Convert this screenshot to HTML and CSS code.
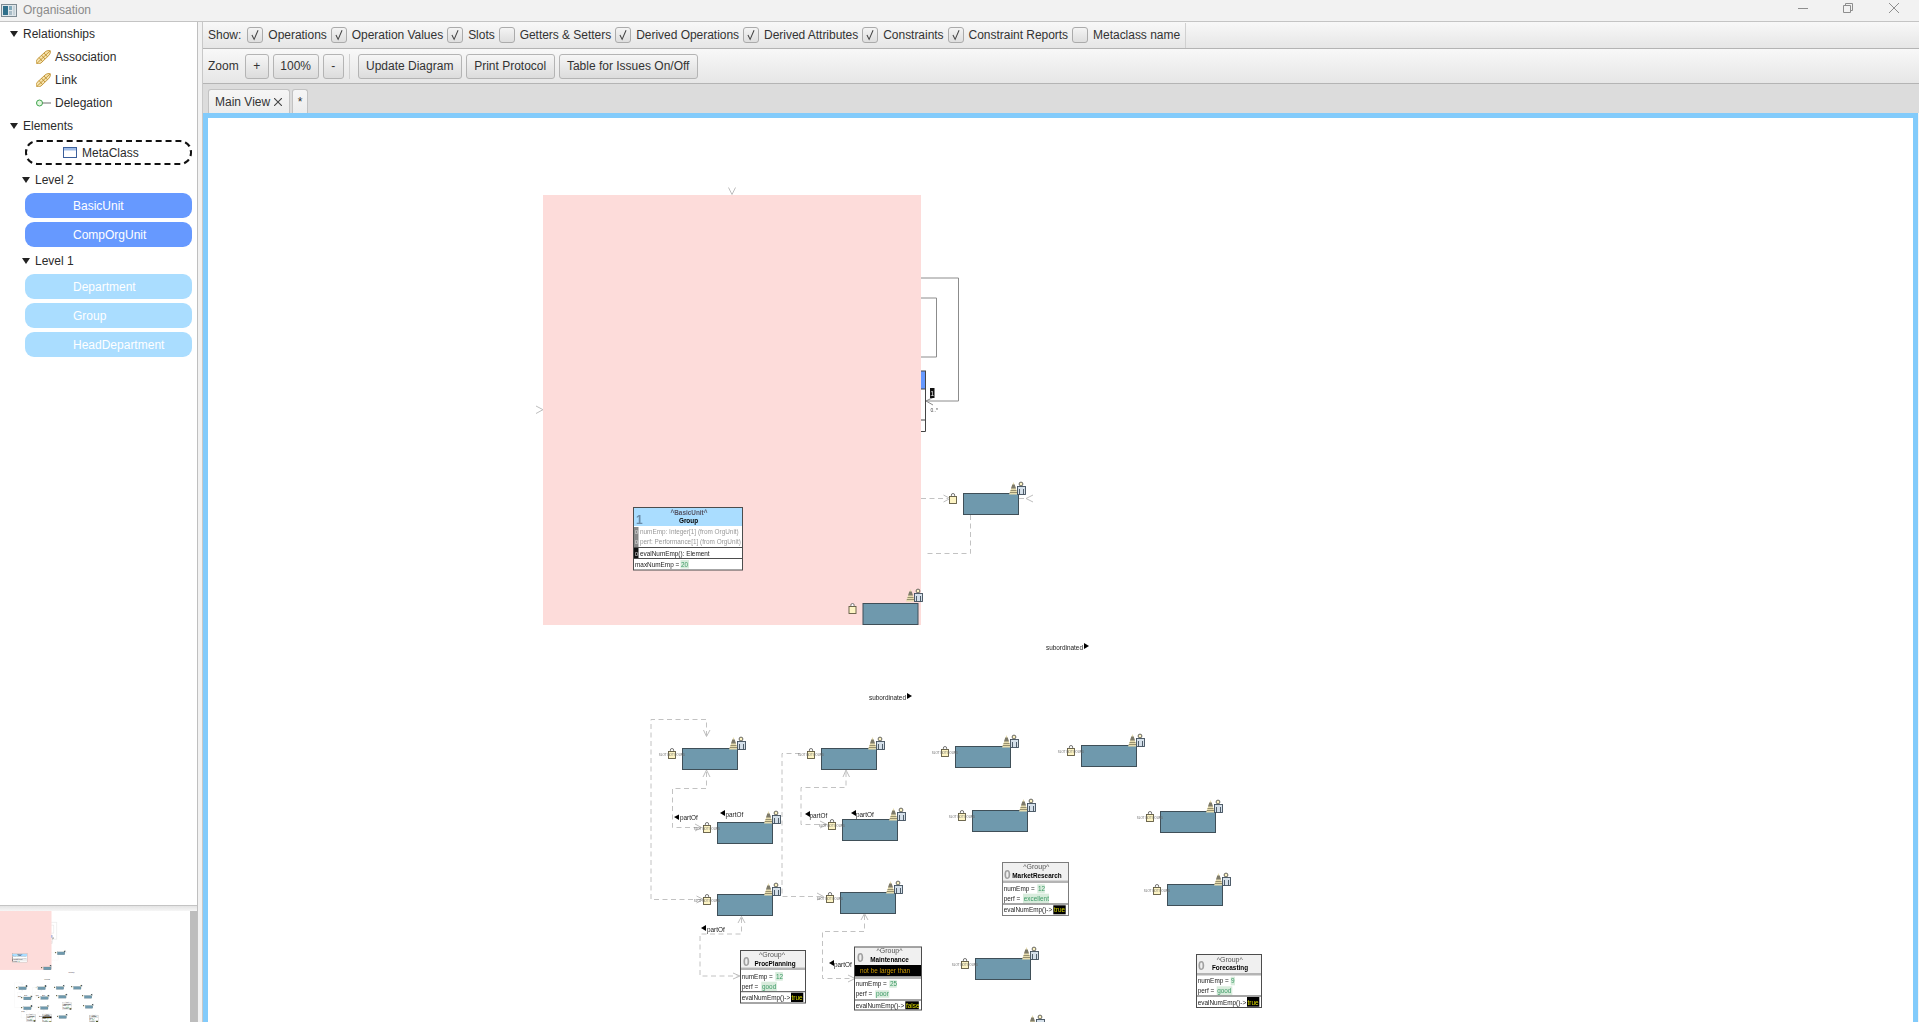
FILE: index.html
```html
<!DOCTYPE html>
<html lang="en">
<head>
<meta charset="utf-8">
<title>Organisation</title>
<link rel="stylesheet" href="styles.css">
</head>
<body>
<div class="app">
  <header class="titlebar">
    <svg class="app-icon" viewBox="0 0 16 13"><rect x="0.5" y="0.5" width="15" height="12" fill="#dfe6ea" stroke="#7d8a92"/><rect x="2" y="2" width="5" height="9" fill="#2f6f8a"/><rect x="8" y="2" width="3" height="4" fill="#7fa8ba"/><rect x="8" y="7" width="3" height="4" fill="#a9bcc6"/><rect x="12" y="2" width="2" height="9" fill="#c6d2d8"/></svg>
    <span class="app-title">Organisation</span>
    <div class="win-controls">
      <svg class="win-btn" viewBox="0 0 10 10"><path d="M0 5.500H10"/></svg>
      <svg class="win-btn restore" viewBox="0 0 10 10"><path d="M0.500 2.500H7.500V9.500H0.500ZM2.500 2.500V0.500H9.500V7.500H7.500"/></svg>
      <svg class="win-btn" viewBox="0 0 10 10"><path d="M0 0L10 10M10 0L0 10"/></svg>
    </div>
  </header>
  <div class="workspace">
    <aside class="sidebar">
      <nav class="palette">
        <div class="tree-row"><span class="caret"></span>Relationships</div>
        <div class="tree-row leaf">
          <svg class="tool-icon" viewBox="0 0 15 14"><g class="assoc"><path d="M1 9.500L9 2C10.500 .6 13.500 .2 14.300 .7 14.800 1.400 14.200 4 12.800 5.500L5 13C3.500 14 .8 14 .4 13.300 .1 12.500 .3 10.500 1 9.500Z"/><path d="M1 13.300L14 1M3 7.500L6.500 11.500M5.500 5.200L9 9M8 3L11.500 6.800"/></g></svg>Association</div>
        <div class="tree-row leaf">
          <svg class="tool-icon" viewBox="0 0 15 14"><g class="assoc"><path d="M1 9.500L9 2C10.500 .6 13.500 .2 14.300 .7 14.800 1.400 14.200 4 12.800 5.500L5 13C3.500 14 .8 14 .4 13.300 .1 12.500 .3 10.500 1 9.500Z"/><path d="M1 13.300L14 1M3 7.500L6.500 11.500M5.500 5.200L9 9M8 3L11.500 6.800"/></g></svg>Link</div>
        <div class="tree-row leaf">
          <svg class="tool-icon" viewBox="0 0 15 14"><circle cx="3.500" cy="7" r="3" fill="#e4f7e0" stroke="#3fa34d"/><path d="M6.500 7H15" stroke="#6e6e6e" fill="none"/></svg>Delegation</div>
        <div class="tree-row"><span class="caret"></span>Elements</div>
        <div class="pill-stack">
          <div class="pill-dashed">
            <svg class="class-icon" viewBox="0 0 14 11"><rect x="0.500" y="0.500" width="13" height="10" fill="#fff" stroke="#3b5f9b"/><rect x="1" y="1" width="12" height="2.500" fill="#9dbbe8"/></svg>MetaClass</div>
          <div class="tree-row sub"><span class="caret"></span>Level 2</div>
          <div class="pill strong">BasicUnit</div>
          <div class="pill strong">CompOrgUnit</div>
          <div class="tree-row sub"><span class="caret"></span>Level 1</div>
          <div class="pill light">Department</div>
          <div class="pill light">Group</div>
          <div class="pill light">HeadDepartment</div>
        </div>
      </nav>
      <div class="minimap">
        <div class="minimap-view">
          <svg class="minimap-svg" viewBox="545 195 1387 810"><use href="#diagram"/></svg>
        </div>
        <div class="minimap-scroll"></div>
      </div>
    </aside>
    <div class="splitter"></div>
    <main class="editor">
      <div class="toolbar show-bar">
        <span class="bar-label">Show:</span>
        <label class="opt"><span class="box"><svg viewBox="0 0 16 16"><path d="M4.500 8L7 13L11.500 2.500"/></svg></span>Operations</label>
        <label class="opt"><span class="box"><svg viewBox="0 0 16 16"><path d="M4.500 8L7 13L11.500 2.500"/></svg></span>Operation Values</label>
        <label class="opt"><span class="box"><svg viewBox="0 0 16 16"><path d="M4.500 8L7 13L11.500 2.500"/></svg></span>Slots</label>
        <label class="opt"><span class="box"></span>Getters &amp; Setters</label>
        <label class="opt"><span class="box"><svg viewBox="0 0 16 16"><path d="M4.500 8L7 13L11.500 2.500"/></svg></span>Derived Operations</label>
        <label class="opt"><span class="box"><svg viewBox="0 0 16 16"><path d="M4.500 8L7 13L11.500 2.500"/></svg></span>Derived Attributes</label>
        <label class="opt"><span class="box"><svg viewBox="0 0 16 16"><path d="M4.500 8L7 13L11.500 2.500"/></svg></span>Constraints</label>
        <label class="opt"><span class="box"><svg viewBox="0 0 16 16"><path d="M4.500 8L7 13L11.500 2.500"/></svg></span>Constraint Reports</label>
        <label class="opt"><span class="box"></span>Metaclass name</label>
        <span class="sep tall"></span>
      </div>
      <div class="toolbar action-bar">
        <span class="bar-label">Zoom</span>
        <button class="btn plus">+</button>
        <button class="btn pct">100%</button>
        <button class="btn minus">-</button>
        <span class="sep"></span>
        <button class="btn update">Update Diagram</button>
        <button class="btn print">Print Protocol</button>
        <button class="btn table">Table for Issues On/Off</button>
      </div>
      <div class="tabbar">
        <div class="tab main-tab">Main View<svg class="tab-x" viewBox="0 0 8 8"><path d="M0 0L8 8M8 0L0 8"/></svg></div>
        <div class="tab add-tab">*</div>
      </div>
      <div class="canvas">
        <svg class="diagram" viewBox="208 118 1705 904" preserveAspectRatio="xMinYMin slice">
          <defs>
            <g id="lock" class="lock">
              <circle cx="4" cy="2.200" r="1.700"/>
              <rect x="0.500" y="3.500" width="7" height="7"/>
            </g>
            <g id="block">
              <rect class="block" x="0.500" y="0.500" width="55" height="21"/>
              <use href="#lock" x="-14" y="0"/>
            </g>
            <g id="slot">
              <use href="#block"/>
              <text class="slot" x="-10" y="7.500">SLOT NOT FOUND</text>
            </g>
            <g id="badge">
              <polygon class="pyr" points="0,12.500 9,12.500 4.500,0"/>
              <path class="pyr-top" d="M3.300 2.500H5.700L7 6.500H2Z"/>
              <path class="pyr-line" d="M1.500 8.500H7.500M.8 10.500H8.200"/>
              <circle class="head" cx="12" cy="2" r="1.900"/>
              <rect class="torso" x="8.500" y="4.500" width="8" height="8"/>
              <path class="torso-line" d="M10.500 7V12.500M14.500 7V12.500"/>
            </g>
          </defs>
          <g id="diagram">
            <g class="frame">
              <path d="M760 278H958.500V401H926"/>
              <path d="M760 298H936.500V357H760"/>
              <rect class="frame-blue" x="800" y="371" width="125.500" height="18"/>
              <path class="frame-dark" d="M925.500 389V431.500H800M800 420H925.500"/>
              <path class="open" d="M933 397.500L926 401L933 405"/>
            </g>
            <rect class="mult-box" x="930" y="388" width="4.500" height="10"/>
            <text class="mult" x="932.300" y="396">1</text>
            <text class="card-num" x="930.500" y="412">0..*</text>

            <rect class="pink" x="543" y="195" width="378" height="430"/>

            <g class="edge">
              <path d="M921 498.500H948"/>
              <path d="M1019 498.500H1025"/>
              <path d="M970.500 515V553.500H924"/>
              <path d="M706.500 736V719.500H651V899.500H703"/>
              <path d="M706.500 772V788.500H672.500V827.500H701"/>
              <path d="M800 753.500H782V896.500H823"/>
              <path d="M846 772V787.500H801V824.500H826"/>
              <path d="M741.500 918V934H700V976H739"/>
              <path d="M864.500 915V931.500H822.500V978.500H853"/>
            </g>
            <g class="open">
              <path d="M728.500 187.500L732 194.500L735.500 187.500"/>
              <path d="M536 406L543 409.700L536 413.500"/>
              <path d="M943.500 495L950 498.500L943.500 502"/>
              <path d="M1033 495L1026 498.500L1033 502"/>
              <path d="M703.500 730L706.500 736.500L710 730"/>
              <path d="M703 777L706.500 770L710 777"/>
              <path d="M695 824L701.500 827.500L695 831"/>
              <path d="M696.500 896L703.500 899.500L696.500 903"/>
              <path d="M843 777L846 770L849.500 777"/>
              <path d="M820 821L827 824.500L820 828"/>
              <path d="M817 893L823.500 896.500L817 900"/>
              <path d="M738 923L741.500 916.500L745 923"/>
              <path d="M733 973L740 976L733 979"/>
              <path d="M861 920L864.500 913.500L868 920"/>
              <path d="M848 975L855 978.500L848 982"/>
            </g>

            <use href="#block" x="963" y="493"/><use href="#badge" x="1009" y="482"/>
            <use href="#block" x="862.500" y="603"/><use href="#badge" x="906" y="589"/>
            <use href="#slot" x="682" y="748"/><use href="#badge" x="729" y="737"/>
            <use href="#slot" x="717" y="822"/><use href="#badge" x="764" y="811"/>
            <use href="#slot" x="717" y="894"/><use href="#badge" x="764" y="883"/>
            <use href="#slot" x="821" y="748"/><use href="#badge" x="868" y="737"/>
            <use href="#slot" x="842" y="819"/><use href="#badge" x="889" y="808"/>
            <use href="#slot" x="840" y="892"/><use href="#badge" x="886" y="881"/>
            <use href="#slot" x="955" y="746"/><use href="#badge" x="1002" y="735"/>
            <use href="#slot" x="1081" y="745"/><use href="#badge" x="1128" y="734"/>
            <use href="#slot" x="972" y="810"/><use href="#badge" x="1019" y="799"/>
            <use href="#slot" x="975" y="958"/><use href="#badge" x="1022" y="947"/>
            <use href="#slot" x="1160" y="811"/><use href="#badge" x="1206" y="800"/>
            <use href="#slot" x="1167" y="884"/><use href="#badge" x="1214" y="873"/>
            <use href="#badge" x="1028" y="1015"/>

            <g class="role">
              <path d="M679 814.500V820L674 817Z"/><text x="680" y="820">partOf</text>
              <path d="M725 810V816L720 813Z"/><text x="725.500" y="817">partOf</text>
              <path d="M810 811V817L805 814Z"/><text x="809.500" y="818">partOf</text>
              <path d="M856 810V816L851 813Z"/><text x="856" y="816.500">partOf</text>
              <path d="M706 925V931L701 928Z"/><text x="707" y="932">partOf</text>
              <path d="M834 960V966L829 963Z"/><text x="834" y="967">partOf</text>
              <text x="1046" y="650">subordinated</text><path d="M1084 643V649L1089 646Z"/>
              <text x="869" y="700">subordinated</text><path d="M907 693V699L912 696Z"/>
            </g>

            <!-- Group -->
            <g>
              <rect class="card-bg" x="633.500" y="507.500" width="109" height="62.500"/>
              <rect class="head-blue" x="634" y="508" width="108" height="18"/>
              <text class="stereo bold-soft" x="689" y="514.500">^BasicUnit^</text>
              <text class="name" x="688.500" y="523">Group</text>
              <text class="level level-blue" x="636" y="523.500">1</text>
              <rect class="mark-gray" x="634" y="527" width="4.500" height="20"/>
              <text class="mark-text" x="634.700" y="534">0</text>
              <text class="mark-text" x="634.700" y="544">0</text>
              <text class="row muted" x="640" y="534">numEmp: Integer[1] (from OrgUnit)</text>
              <text class="row muted" x="640" y="544">perf: Performance[1] (from OrgUnit)</text>
              <path class="rule" d="M634 547.500H742M634 558.500H742"/>
              <rect class="mark-black" x="634" y="548" width="4.500" height="10"/>
              <text class="mark-text" x="634.700" y="556">0</text>
              <text class="row" x="640" y="556">evalNumEmp(): Element</text>
              <rect class="val-bg" x="680.500" y="560" width="8.500" height="8.500"/>
              <text class="row" x="635" y="567">maxNumEmp =</text>
              <text class="row val" x="681" y="567">20</text>
              <rect class="card-line" x="633.500" y="507.500" width="109" height="62.500"/>
            </g>

            <!-- ProcPlanning -->
            <g>
              <rect class="card-bg" x="740.500" y="950.500" width="65" height="52.500"/>
              <rect class="head-gray" x="741" y="951" width="64" height="16.500"/>
              <rect class="bar" x="741" y="967.500" width="64" height="2.500"/>
              <text class="stereo" x="772" y="957">^Group^</text>
              <text class="name" x="775" y="966">ProcPlanning</text>
              <text class="level" x="743" y="966">0</text>
              <text class="row" x="741.700" y="978.500">numEmp =</text>
              <rect class="val-bg" x="775.300" y="972" width="7.500" height="8.700"/><text class="row val" x="776" y="978.500">12</text>
              <text class="row" x="741.700" y="988.700">perf =</text>
              <rect class="val-bg" x="761.300" y="981.700" width="15.500" height="9.300"/><text class="row val" x="762" y="988.700">good</text>
              <path class="rule" d="M741 991.700H805"/>
              <text class="row" x="741.700" y="1000">evalNumEmp()-&gt;</text>
              <rect class="res-bg" x="791" y="992.700" width="12.300" height="9.300"/><text class="res" x="791.500" y="1000">true</text>
              <rect class="card-line" x="740.500" y="950.500" width="65" height="52.500"/>
            </g>

            <!-- Maintenance -->
            <g>
              <rect class="card-bg" x="854.500" y="947" width="67" height="63"/>
              <rect class="head-gray" x="855" y="947.500" width="66" height="17.500"/>
              <text class="stereo" x="889.500" y="953">^Group^</text>
              <text class="name" x="889.500" y="962">Maintenance</text>
              <text class="level" x="857" y="961.500">0</text>
              <rect class="res-bg" x="855" y="965" width="66" height="11.500"/>
              <text class="warn" x="860" y="973.200">not be larger than</text>
              <rect class="bar" x="855" y="976.500" width="66" height="2.500"/>
              <text class="row" x="855.700" y="986">numEmp =</text>
              <rect class="val-bg" x="889.300" y="980.300" width="7.500" height="7.500"/><text class="row val" x="890" y="986">25</text>
              <text class="row" x="855.700" y="996">perf =</text>
              <rect class="val-bg" x="875.300" y="990.300" width="14" height="7.500"/><text class="row val" x="876" y="996">poor</text>
              <path class="rule" d="M855 1000H921"/>
              <text class="row" x="855.700" y="1007.500">evalNumEmp()-&gt;</text>
              <rect class="res-bg" x="905.300" y="1001.300" width="13.500" height="8"/><text class="res" x="906" y="1007.500">false</text>
              <rect class="card-line" x="854.500" y="947" width="67" height="63"/>
            </g>

            <!-- MarketResearch -->
            <g>
              <rect class="card-bg" x="1002.500" y="862.500" width="66" height="53"/>
              <rect class="head-gray" x="1003" y="863" width="65" height="17.500"/>
              <rect class="bar" x="1003" y="880.500" width="65" height="2.500"/>
              <text class="stereo" x="1036.300" y="869">^Group^</text>
              <text class="name" x="1037" y="878">MarketResearch</text>
              <text class="level" x="1004" y="878.500">0</text>
              <text class="row" x="1003.700" y="891">numEmp =</text>
              <rect class="val-bg" x="1037.300" y="884.300" width="7.500" height="9"/><text class="row val" x="1038" y="891">12</text>
              <text class="row" x="1003.700" y="901">perf =</text>
              <rect class="val-bg" x="1023" y="893.700" width="26" height="9.600"/><text class="row val" x="1023.700" y="901">excellent</text>
              <path class="rule" d="M1003 904H1068"/>
              <text class="row" x="1003.700" y="912">evalNumEmp()-&gt;</text>
              <rect class="res-bg" x="1053.300" y="905.300" width="12.400" height="9"/><text class="res" x="1054" y="912">true</text>
              <rect class="card-line soft" x="1002.500" y="862.500" width="66" height="53"/>
            </g>

            <!-- Forecasting -->
            <g>
              <rect class="card-bg" x="1196.500" y="954.500" width="65" height="53"/>
              <rect class="head-gray" x="1197" y="955" width="64" height="18"/>
              <rect class="bar" x="1197" y="973" width="64" height="2.500"/>
              <text class="stereo" x="1229.700" y="961.700">^Group^</text>
              <text class="name" x="1230" y="970">Forecasting</text>
              <text class="level" x="1198" y="970">0</text>
              <text class="row" x="1197.700" y="983">numEmp =</text>
              <rect class="val-bg" x="1230.700" y="976.700" width="4.300" height="8.600"/><text class="row val" x="1231" y="983">9</text>
              <text class="row" x="1197.700" y="993">perf =</text>
              <rect class="val-bg" x="1216.700" y="986.300" width="15.600" height="9"/><text class="row val" x="1217.200" y="993">good</text>
              <path class="rule" d="M1197 996H1261"/>
              <text class="row" x="1197.700" y="1004.700">evalNumEmp()-&gt;</text>
              <rect class="res-bg" x="1247" y="997" width="12.300" height="9.700"/><text class="res" x="1247.500" y="1004.500">true</text>
              <rect class="card-line" x="1196.500" y="954.500" width="65" height="53"/>
            </g>
          </g>
        </svg>
      </div>
    </main>
  </div>
</div>
</body>
</html>
```
FILE: styles.css
```css
* { box-sizing: border-box; }
html, body { margin: 0; height: 100%; overflow: hidden; }
body { font-family: "Liberation Sans", Arial, sans-serif; font-size: 12px; color: #333; background: #f4f4f4; }
.app { display: flex; flex-direction: column; height: 100vh; }

.titlebar { height: 22px; flex: none; display: flex; align-items: center; background: #f2f2f2; border-bottom: 1px solid #c4c4c4; padding-left: 1px; padding-bottom: 1px; }
.app-icon { width: 16px; height: 13px; }
.app-title { margin-left: 6px; color: #8a8a8a; font-size: 12px; }
.win-controls { margin-left: auto; display: flex; gap: 35px; padding: 0 20px 4px 0; }
.win-btn { width: 10px; height: 10px; fill: none; stroke: #8e8e8e; stroke-width: 1; }
.win-btn.restore { margin-right: 1px; }

.workspace { flex: 1; min-height: 0; display: flex; }
.sidebar { width: 197px; flex: none; display: flex; flex-direction: column; background: #fff; }
.palette { flex: 1; min-height: 0; padding-right: 5px; }
.tree-row { height: 23px; display: flex; align-items: center; padding-left: 10px; color: #2b2b2b; }
.tree-row.leaf { padding-left: 36px; }
.caret { width: 0; height: 0; border-left: 4px solid transparent; border-right: 4px solid transparent; border-top: 6px solid #222; margin-right: 5px; }
.tool-icon { width: 15px; height: 14px; margin-right: 4px; flex: none; }
.assoc { fill: #f6e3ae; stroke: #b98620; stroke-width: 0.8; }
.pill-stack { display: flex; flex-direction: column; gap: 4px; padding: 3px 0 0 25px; }
.pill-stack .tree-row.sub { margin: -2px 0 -2px -25px; padding-left: 22px; }
.pill-dashed { width: 167px; height: 25px; margin-bottom: 1px; display: flex; align-items: center; padding-left: 36px; border: 2px dashed #111; border-radius: 12px; color: #2b2b2b; }
.class-icon { width: 14px; height: 11px; margin-right: 5px; }
.pill { width: 167px; height: 25px; display: flex; align-items: center; padding-left: 48px; border-radius: 9px; color: #fff; }
.pill.strong { background: #6699ff; }
.pill.light { background: #aaddff; }

.minimap { height: 117px; flex: none; border-top: 1px solid #c4c4c4; padding-top: 5px; display: flex; background: linear-gradient(#e4e4e4, #f6f6f6 5px, #fff 5px); }
.minimap-view { width: 190px; overflow: hidden; background: #fff; }
.minimap-svg { display: block; width: 190px; height: 111px; }
.minimap-scroll { width: 7px; background: #bdbdbd; }

.splitter { width: 6px; flex: none; background: #f2f2f2; border-left: 1px solid #bfbfbf; border-right: 1px solid #c8c8c8; }

.editor { flex: 1; min-width: 0; display: flex; flex-direction: column; }
.toolbar { display: flex; align-items: center; flex: none; background: linear-gradient(#f8f8f8, #e6e6e6); border-bottom: 1px solid #b4b4b4; padding-left: 5px; color: #333; }
.show-bar { height: 27px; }
.action-bar { height: 35px; }
.bar-label { margin-right: 6px; }
.opt { display: flex; align-items: center; gap: 5px; margin-right: 4px; white-space: nowrap; letter-spacing: -0.03px; }
.box { width: 16px; height: 16px; flex: none; border: 1px solid #ababab; border-radius: 3px; background: linear-gradient(#f4f4f4, #dedede); }
.box svg { display: block; width: 14px; height: 14px; fill: none; stroke: #444; stroke-width: 1.2; }
.sep { width: 1px; height: 25px; background: #d0d0d0; margin: 0 8px 0 1px; }
.btn { height: 25px; padding: 0; font: inherit; color: #333; border: 1px solid #b4b4b4; border-radius: 3px; background: linear-gradient(#f6f6f6, #dcdcdc); margin-right: 4px; }
.plus { width: 24px; }
.pct { width: 46px; }
.minus { width: 21px; }
.update { width: 104px; }
.print { width: 89px; }
.table { width: 139px; }

.tabbar { height: 29px; flex: none; display: flex; align-items: flex-end; gap: 2px; padding-left: 5px; background: #dcdcdc; }
.tab { height: 24px; display: flex; align-items: center; border: 1px solid #c2c2c2; border-bottom: none; border-radius: 3px 3px 0 0; background: linear-gradient(#f6f6f6, #ececec); color: #333; }
.main-tab { width: 82px; padding-left: 6px; }
.add-tab { width: 16px; justify-content: center; }
.tab-x { width: 8px; height: 8px; margin-left: 4px; fill: none; stroke: #444; stroke-width: 1.1; }

.canvas { flex: 1; min-height: 0; border: 5px solid #82cbfb; border-bottom: none; margin-right: 1px; background: #fff; overflow: hidden; }
.diagram { display: block; width: 100%; height: 100%; filter: blur(0.3px); }

.pink { fill: #fddcda; }
.block { fill: #6f99ad; stroke: #3f4f58; stroke-width: 1; }
.lock circle { fill: #fff; stroke: #666; stroke-width: .9; }
.lock rect { fill: #fdf4c4; stroke: #5f5a40; stroke-width: .9; }
.slot { font-family: "Liberation Sans", Arial, sans-serif; font-size: 3px; fill: #666; text-anchor: middle; }
.pyr { fill: #e6dcae; }
.pyr-top { fill: #7d7a6a; }
.pyr-line { stroke: #8d8768; stroke-width: .9; fill: none; }
.head { fill: #fdf4c4; stroke: #444; stroke-width: .8; }
.torso { fill: #d5e0ea; stroke: #3f4f5c; stroke-width: .9; }
.torso-line { stroke: #3f4f5c; stroke-width: .9; fill: none; }
.frame path { fill: none; stroke: #8c8c8c; stroke-width: 1; }
.frame path.frame-dark { stroke: #444; }
.frame-blue { fill: #6699ff; stroke: #444; stroke-width: 1; }
.frame path.open { stroke: #888; }
.mult-box { fill: #111; }
.mult { font-family: "Liberation Sans", Arial, sans-serif; font-size: 7px; fill: #eee; text-anchor: middle; }
.card-num { font-family: "Liberation Sans", Arial, sans-serif; font-size: 5px; fill: #444; }
.edge path { fill: none; stroke: #c2c2c2; stroke-width: 1; stroke-dasharray: 5 3.5; }
.open path { fill: none; stroke: #bdbdbd; stroke-width: 1; }
.role path { fill: #000; }
.role text { font-family: "Liberation Sans", Arial, sans-serif; font-size: 6.400px; fill: #222; }
.card-bg { fill: #fff; }
.card-line { fill: none; stroke: #4d4d4d; stroke-width: 1; }
.card-line.soft { stroke: #7c7c7c; }
.head-blue { fill: #aaddff; }
.head-gray { fill: #f0f0f0; }
.bar { fill: #b4b4b4; }
.rule { stroke: #4d4d4d; stroke-width: 1; fill: none; }
.stereo, .name, .row, .res, .warn, .level, .mark-text { font-family: "Liberation Sans", Arial, sans-serif; }
.stereo { font-size: 7px; fill: #555; text-anchor: middle; }
.bold-soft { font-weight: 700; font-size: 6.400px; fill: #556; }
.name { font-size: 6.400px; font-weight: 700; fill: #000; text-anchor: middle; }
.level { font-size: 12px; font-weight: 700; fill: #a0a0a0; }
.level-blue { fill: #6a8ba8; }
.row { font-size: 6.400px; fill: #222; }
.row.muted { fill: #999; }
.val { fill: #3d9a66; }
.val-bg { fill: #d8ecdc; }
.res-bg { fill: #000; }
.res { font-size: 6.400px; fill: #dddd00; }
.warn { font-size: 6.400px; fill: #cc9900; }
.mark-gray { fill: #888; }
.mark-black { fill: #111; }
.mark-text { font-size: 6px; fill: #ddd; }
```
